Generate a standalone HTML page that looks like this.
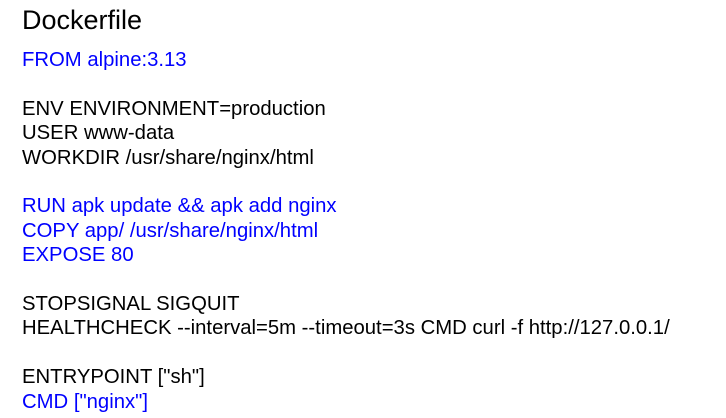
<!DOCTYPE html>
<html><head><meta charset="utf-8"><style>
html,body{margin:0;padding:0;background:#fff;width:726px;height:418px;overflow:hidden}
body{font-family:"Liberation Sans",Arial,sans-serif;color:#000}
h1{font-weight:normal;font-size:27px;margin:0;position:absolute;left:22px;top:5px;line-height:30px}
.c{position:absolute;left:22px;top:48px;font-size:20.3px;line-height:24.4px;white-space:pre}
.b{color:#0000ff}
</style></head><body>
<h1>Dockerfile</h1>
<div class="c"><span class="b">FROM alpine:3.13</span>

ENV ENVIRONMENT=production
USER www-data
WORKDIR /usr/share/nginx/html

<span class="b">RUN apk update &amp;&amp; apk add nginx
COPY app/ /usr/share/nginx/html
EXPOSE 80</span>

STOPSIGNAL SIGQUIT
HEALTHCHECK --interval=5m --timeout=3s CMD curl -f http://127.0.0.1/

ENTRYPOINT ["sh"]
<span class="b">CMD ["nginx"]</span></div>
</body></html>
